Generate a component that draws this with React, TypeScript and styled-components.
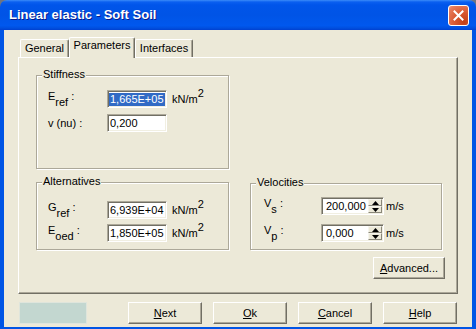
import React from "react";
import styled, { createGlobalStyle } from "styled-components";

const GlobalStyle = createGlobalStyle`
  html, body { margin: 0; padding: 0; }
  body {
    background: #6f7480;
    font-family: "Liberation Sans", Arial, sans-serif;
    font-size: 11px;
    color: #000;
  }
`;

const Viewport = styled.div`
  width: 476px;
  height: 329px;
  overflow: hidden;
  background: #6f7480;
`;

const Window = styled.div`
  width: 476px;
  height: 331px;
  display: flex;
  flex-direction: column;
`;

const TitleBar = styled.div`
  height: 30px;
  flex: none;
  box-sizing: border-box;
  display: flex;
  align-items: center;
  justify-content: space-between;
  padding: 0 7px 0 9px;
  border-radius: 7px 7px 0 0;
  background: linear-gradient(
    180deg,
    #3b8cf9 0,
    #0a5ff0 2px,
    #0055ea 5px,
    #0054e6 50%,
    #0058ee 85%,
    #0050e0 93%,
    #0040d0 100%
  );
`;

const Title = styled.div`
  font-family: "Liberation Sans", Arial, sans-serif;
  font-weight: bold;
  font-size: 13px;
  color: #fff;
  text-shadow: 1px 1px #0a1a8a;
  line-height: 16px;
`;

const CloseButton = styled.div`
  width: 21px;
  height: 21px;
  box-sizing: border-box;
  border: 1px solid #fff;
  border-radius: 3px;
  display: flex;
  align-items: center;
  justify-content: center;
  background: radial-gradient(circle at 80% 85%, #c33f16 0%, #d95a33 45%, #e77c5c 85%, #f0a088 100%);
`;

const Frame = styled.div`
  flex: 1;
  display: flex;
  flex-direction: column;
  background: #ece9d8;
  border-left: 4px solid #0055e5;
  border-right: 4px solid #0055e5;
  border-bottom: 4px solid #0055e5;
  padding: 7px 14px 0 14px;
`;

const TabStrip = styled.div`
  display: flex;
  align-items: flex-end;
  height: 20px;
  padding-left: 2px;
  position: relative;
  z-index: 1;
`;

const Tab = styled.div<{ $w: number; $active?: boolean }>`
  width: ${(p) => p.$w}px;
  height: ${(p) => (p.$active ? 21 : 18)}px;
  margin-bottom: ${(p) => (p.$active ? -1 : 0)}px;
  box-sizing: border-box;
  background: #ece9d8;
  border-top: 1px solid #fff;
  border-left: 1px solid #fff;
  border-right: 1px solid #716f64;
  border-radius: 2px 2px 0 0;
  box-shadow: inset -1px 0 #aca899;
  display: flex;
  justify-content: center;
  padding-top: ${(p) => (p.$active ? 1 : 2)}px;
  font-size: 11px;
  line-height: 13px;
`;

const Panel = styled.div`
  height: 237px;
  box-sizing: border-box;
  border-top: 1px solid #fff;
  border-left: 1px solid #fff;
  border-right: 1px solid #716f64;
  border-bottom: 1px solid #716f64;
  box-shadow: inset -1px -1px #aca899;
  padding: 17px 13px 0 17px;
  display: flex;
  flex-direction: column;
`;

const GroupRow = styled.div<{ $mt?: number }>`
  display: flex;
  align-items: flex-start;
  gap: 21px;
  margin-top: ${(p) => p.$mt ?? 0}px;
`;

const Group = styled.div<{ $w: number; $h: number; $pad: number; $mt?: number }>`
  width: ${(p) => p.$w - 1}px;
  height: ${(p) => p.$h - 1}px;
  margin-top: ${(p) => p.$mt ?? 0}px;
  box-sizing: border-box;
  border: 1px solid #aca899;
  box-shadow: inset 1px 1px #fff, 1px 1px 0 #fff;
  display: flex;
  flex-direction: column;
  padding-left: ${(p) => p.$pad}px;
`;

const GroupTitle = styled.div<{ $pad: number }>`
  align-self: flex-start;
  margin: -8px 0 0 ${(p) => 5 - p.$pad}px;
  padding: 0 1px;
  background: #ece9d8;
  line-height: 13px;
  font-size: 11px;
`;

const Rows = styled.div<{ $top: number; $gap: number }>`
  display: flex;
  flex-direction: column;
  gap: ${(p) => p.$gap}px;
  margin-top: ${(p) => p.$top}px;
`;

const FieldRow = styled.div`
  display: flex;
  align-items: center;
  height: 18px;
`;

const Label = styled.div<{ $w: number }>`
  width: ${(p) => p.$w}px;
  flex: none;
  line-height: 13px;
  white-space: nowrap;
`;

const Sub = styled.span`
  vertical-align: -6px;
`;

const Edit = styled.div`
  width: 60px;
  height: 18px;
  flex: none;
  box-sizing: border-box;
  border: 1px solid;
  border-color: #aca899 #fff #fff #aca899;
  box-shadow: inset 1px 1px #716f64, inset -1px -1px #f1efe2;
  background: #fff;
  padding: 1px 1px 1px 2px;
  display: flex;
  align-items: center;
  line-height: 13px;
  white-space: nowrap;
  overflow: hidden;
`;

const Selected = styled.span`
  background: #316ac5;
  color: #fff;
  margin-left: -1px;
  padding: 0 1px;
`;

const Unit = styled.div<{ $ml: number }>`
  margin-left: ${(p) => p.$ml}px;
  line-height: 13px;
  white-space: nowrap;
`;

const Sup = styled.span`
  vertical-align: 6px;
  line-height: 0;
`;

const Spin = styled.div`
  width: 63px;
  height: 18px;
  flex: none;
  box-sizing: border-box;
  border: 1px solid;
  border-color: #aca899 #fff #fff #aca899;
  box-shadow: inset 1px 1px #716f64, inset -1px -1px #f1efe2;
  background: #fff;
  padding: 1px;
  display: flex;
`;

const SpinText = styled.div`
  flex: 1;
  padding-left: 3px;
  display: flex;
  align-items: center;
  line-height: 13px;
`;

const SpinButtons = styled.div`
  width: 14px;
  display: flex;
  flex-direction: column;
`;

const SpinBtn = styled.div`
  flex: 1;
  box-sizing: border-box;
  background: #ece9d8;
  border: 1px solid;
  border-color: #f6f5ee #8a877a #8a877a #f6f5ee;
  display: flex;
  align-items: center;
  justify-content: center;
`;

const ActionRow = styled.div<{ $mt: number }>`
  display: flex;
  justify-content: flex-end;
  margin-top: ${(p) => p.$mt}px;
  margin-right: -1px;
`;

const Button = styled.div<{ $w: number }>`
  width: ${(p) => p.$w}px;
  height: 22px;
  box-sizing: border-box;
  background: #ece9d8;
  border: 1px solid;
  border-color: #fff #716f64 #716f64 #fff;
  box-shadow: inset -1px -1px #aca899;
  display: flex;
  align-items: center;
  justify-content: center;
  line-height: 13px;
  font-size: 11px;
`;

const Mn = styled.span`
  text-decoration: underline;
  text-underline-offset: 1px;
`;

const BottomBar = styled.div`
  display: flex;
  align-items: center;
  margin-top: 8px;
  padding-left: 1px;
  padding-right: 1px;
  gap: 11px;
`;

const StatusBox = styled.div`
  width: 68px;
  height: 22px;
  box-sizing: border-box;
  background: #c3d7d0;
  border: 1px solid #dfe5dc;
  margin-right: auto;
`;

const Arrow = ({ up }: { up?: boolean }) => (
  <svg width="7" height="4" viewBox="0 0 7 4">
    <path d={up ? "M3.5 0 L7 4 L0 4 Z" : "M0 0 L7 0 L3.5 4 Z"} fill="#000" />
  </svg>
);

const SpinBox = ({ value }: { value: string }) => (
  <Spin>
    <SpinText>{value}</SpinText>
    <SpinButtons>
      <SpinBtn>
        <Arrow up />
      </SpinBtn>
      <SpinBtn>
        <Arrow />
      </SpinBtn>
    </SpinButtons>
  </Spin>
);

const KN = () => (
  <Unit $ml={5}>
    kN/m<Sup>2</Sup>
  </Unit>
);

export default function App() {
  return (
    <>
      <GlobalStyle />
      <Viewport>
        <Window>
          <TitleBar>
            <Title>Linear elastic - Soft Soil</Title>
            <CloseButton>
              <svg width="11" height="11" viewBox="0 0 11 11">
                <path d="M1.5 1.5 L9.5 9.5 M9.5 1.5 L1.5 9.5" stroke="#fff" strokeWidth="2" strokeLinecap="square" />
              </svg>
            </CloseButton>
          </TitleBar>
          <Frame>
            <TabStrip>
              <Tab $w={49}>General</Tab>
              <Tab $w={66} $active>
                Parameters
              </Tab>
              <Tab $w={58}>Interfaces</Tab>
            </TabStrip>
            <Panel>
              <GroupRow>
                <Group $w={194} $h={95} $pad={11}>
                  <GroupTitle $pad={11}>Stiffness</GroupTitle>
                  <Rows $top={9} $gap={6}>
                    <FieldRow>
                      <Label $w={59}>
                        E<Sub>ref</Sub> :
                      </Label>
                      <Edit>
                        <Selected>1,665E+05</Selected>
                      </Edit>
                      <KN />
                    </FieldRow>
                    <FieldRow>
                      <Label $w={59}>v (nu) :</Label>
                      <Edit>0,200</Edit>
                    </FieldRow>
                  </Rows>
                </Group>
              </GroupRow>
              <GroupRow $mt={13}>
                <Group $w={194} $h={69} $pad={11}>
                  <GroupTitle $pad={11}>Alternatives</GroupTitle>
                  <Rows $top={13} $gap={5}>
                    <FieldRow>
                      <Label $w={59}>
                        G<Sub>ref</Sub> :
                      </Label>
                      <Edit>6,939E+04</Edit>
                      <KN />
                    </FieldRow>
                    <FieldRow>
                      <Label $w={59}>
                        E<Sub>oed</Sub> :
                      </Label>
                      <Edit>1,850E+05</Edit>
                      <KN />
                    </FieldRow>
                  </Rows>
                </Group>
                <Group $w={193} $h={68} $pad={13} $mt={1}>
                  <GroupTitle $pad={13}>Velocities</GroupTitle>
                  <Rows $top={8} $gap={9}>
                    <FieldRow>
                      <Label $w={57}>
                        V<Sub>s</Sub> :
                      </Label>
                      <SpinBox value="200,000" />
                      <Unit $ml={2}>m/s</Unit>
                    </FieldRow>
                    <FieldRow>
                      <Label $w={57}>
                        V<Sub>p</Sub> :
                      </Label>
                      <SpinBox value="0,000" />
                      <Unit $ml={2}>m/s</Unit>
                    </FieldRow>
                  </Rows>
                </Group>
              </GroupRow>
              <ActionRow $mt={7}>
                <Button $w={72}>
                  <Mn>A</Mn>dvanced...
                </Button>
              </ActionRow>
            </Panel>
            <BottomBar>
              <StatusBox />
              <Button $w={74}>
                <Mn>N</Mn>ext
              </Button>
              <Button $w={74}>
                <Mn>O</Mn>k
              </Button>
              <Button $w={74}>
                <Mn>C</Mn>ancel
              </Button>
              <Button $w={74}>
                <Mn>H</Mn>elp
              </Button>
            </BottomBar>
          </Frame>
        </Window>
      </Viewport>
    </>
  );
}
